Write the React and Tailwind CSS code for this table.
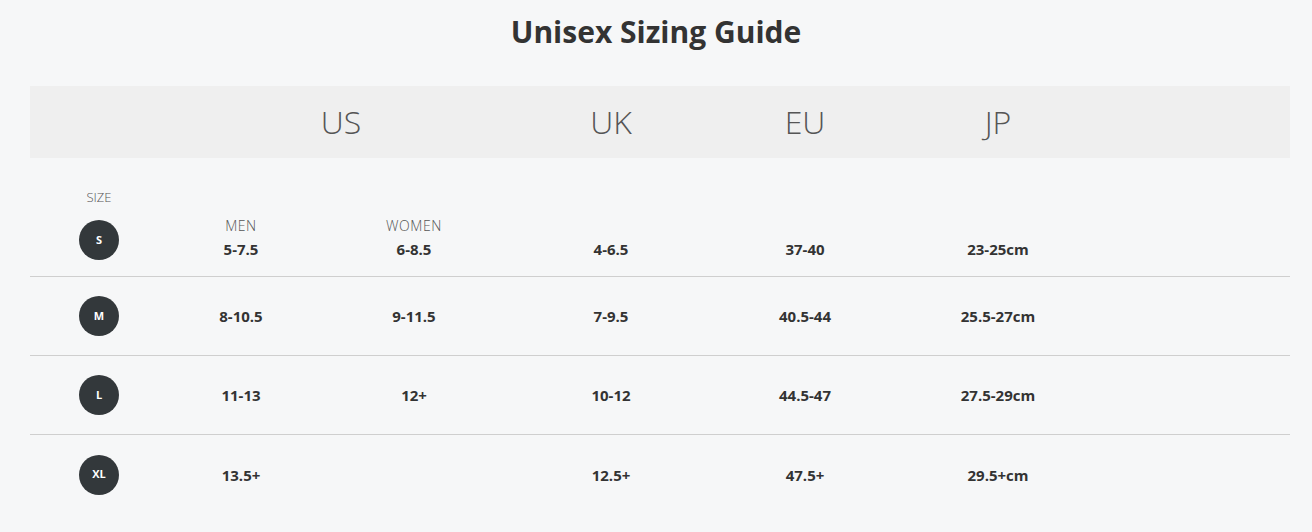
const rows = [
  { size: "M", men: "8-10.5", women: "9-11.5", uk: "7-9.5", eu: "40.5-44", jp: "25.5-27cm" },
  { size: "L", men: "11-13", women: "12+", uk: "10-12", eu: "44.5-47", jp: "27.5-29cm" },
  { size: "XL", men: "13.5+", women: "", uk: "12.5+", eu: "47.5+", jp: "29.5+cm" },
];

const cols = "grid grid-cols-[138px_146px_200px_194px_194px_192px_1fr]";

function Badge({ label }) {
  return (
    <div className="w-10 h-10 rounded-full bg-[#33383b] text-white text-[11px] font-bold flex items-center justify-center">
      {label}
    </div>
  );
}

function Value({ children }) {
  return <div className="text-[15px] font-bold text-[#333] leading-5">{children}</div>;
}

function Label({ children }) {
  return (
    <div className="text-[14px] font-light text-[#555] leading-4 uppercase tracking-[0.04em] mb-[5px]">
      {children}
    </div>
  );
}

export default function App() {
  return (
    <div className="w-[1312px] h-[532px] bg-[#f6f7f8] font-['Open_Sans',sans-serif] text-[#333]">
      <h1 className="h-[86px] pt-[12px] text-center text-[30px] font-bold text-[#333] leading-10">
        Unisex Sizing Guide
      </h1>
      <div className="ml-[30px] w-[1260px]">
        <div className={`${cols} h-[72px] bg-[#efefef] items-center text-[32px] font-light text-[#555] text-center`}>
          <div />
          <div className="col-span-2">US</div>
          <div>UK</div>
          <div>EU</div>
          <div>JP</div>
          <div />
        </div>

        <div className={`${cols} h-[119px] items-end text-center border-b border-[#cfcfcf]`}>
          <div className="flex flex-col items-center pb-4">
            <div className="text-[13px] font-light text-[#555] leading-4 uppercase">Size</div>
            <div className="mt-[15px]">
              <Badge label="S" />
            </div>
          </div>
          <div className="pb-[17px]">
            <Label>Men</Label>
            <Value>5-7.5</Value>
          </div>
          <div className="pb-[17px]">
            <Label>Women</Label>
            <Value>6-8.5</Value>
          </div>
          <div className="pb-[17px]"><Value>4-6.5</Value></div>
          <div className="pb-[17px]"><Value>37-40</Value></div>
          <div className="pb-[17px]"><Value>23-25cm</Value></div>
          <div />
        </div>

        {rows.map((r, i) => (
          <div
            key={r.size}
            className={`${cols} h-[79px] items-center text-center ${i < rows.length - 1 ? "border-b border-[#cfcfcf]" : ""}`}
          >
            <div className="flex justify-center"><Badge label={r.size} /></div>
            <Value>{r.men}</Value>
            <Value>{r.women}</Value>
            <Value>{r.uk}</Value>
            <Value>{r.eu}</Value>
            <Value>{r.jp}</Value>
            <div />
          </div>
        ))}
      </div>
    </div>
  );
}
